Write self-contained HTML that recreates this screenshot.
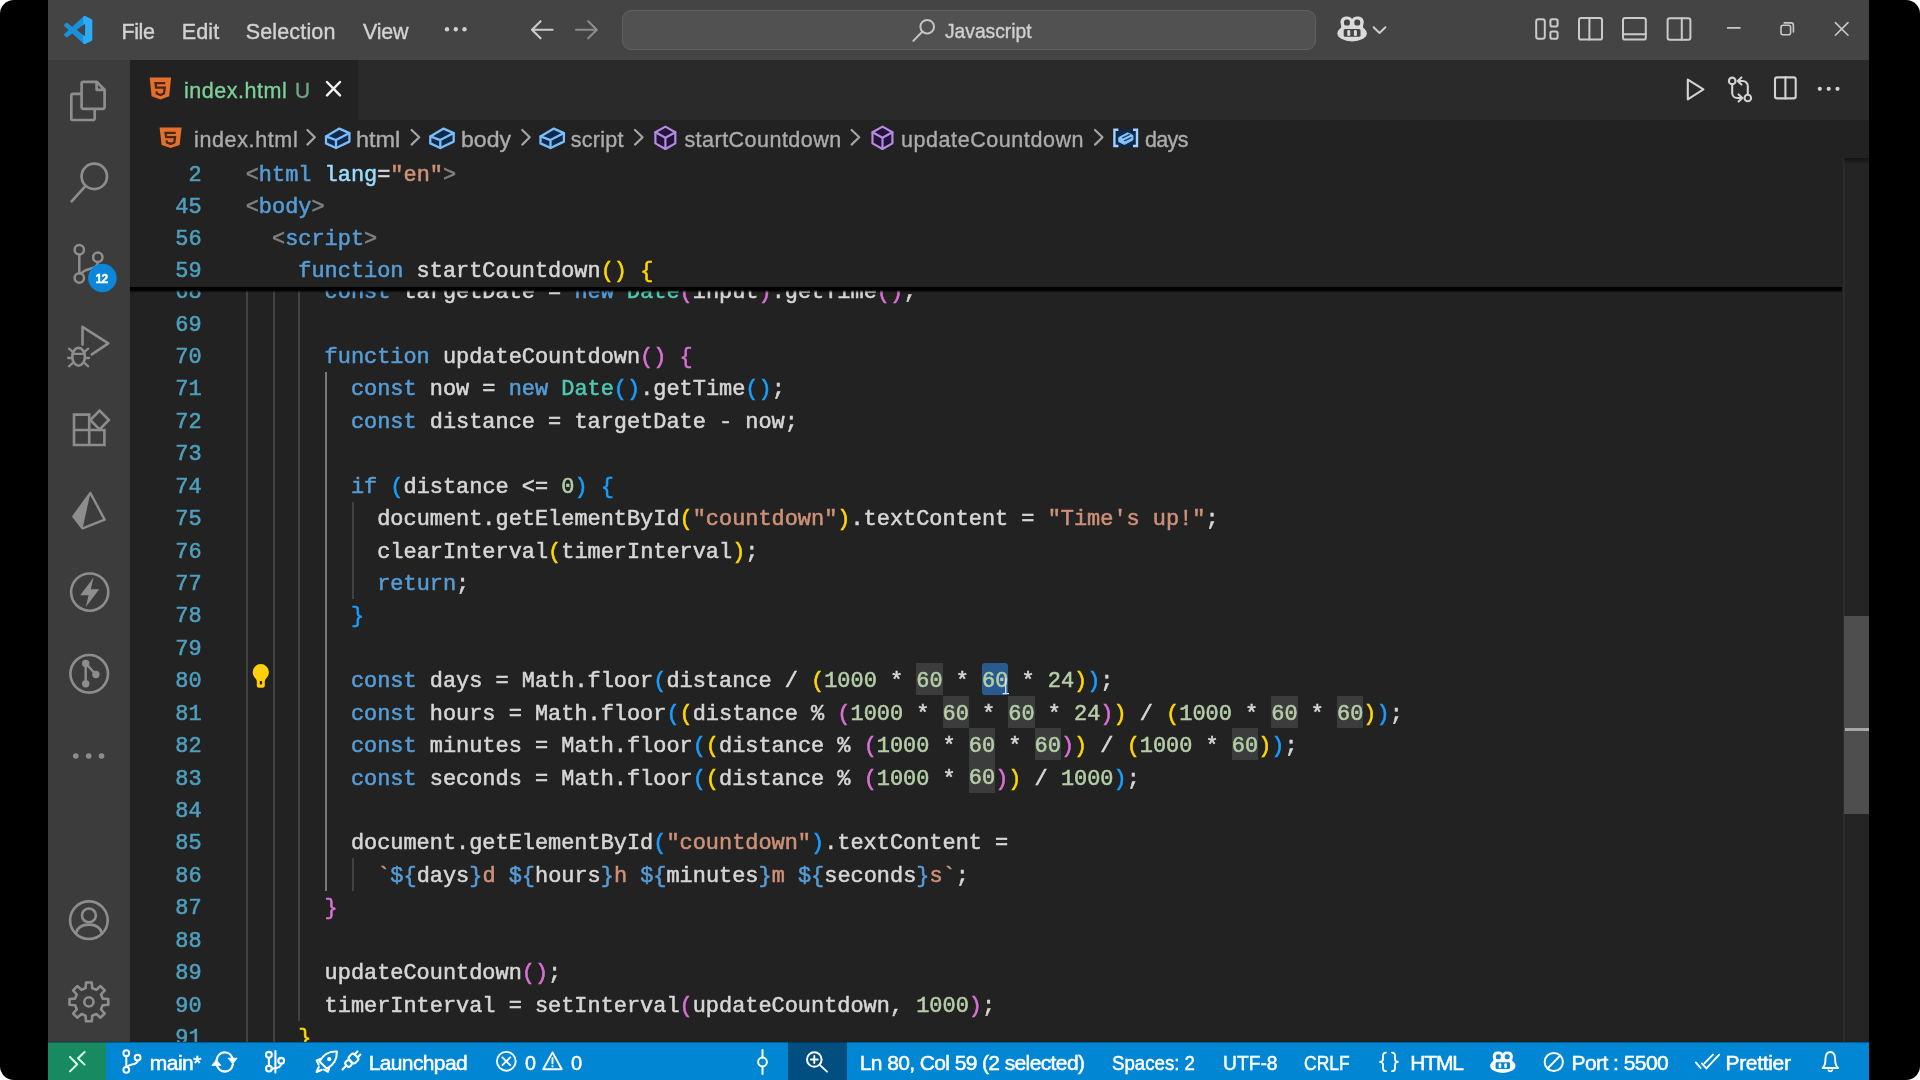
<!DOCTYPE html>
<html><head><meta charset="utf-8"><title>index.html - Javascript - Visual Studio Code</title>
<style>
*{margin:0;padding:0;box-sizing:border-box}
html,body{width:1920px;height:1080px;overflow:hidden;background:#fff;font-family:"Liberation Sans",sans-serif}
#frame{will-change:transform;position:absolute;left:0;top:0;width:1920px;height:1080px;background:#000;border-radius:14px;overflow:hidden}
#frame div,#frame span.t{position:absolute}
#win{left:48px;top:0;width:1821px;height:1080px;background:#222222}
#titlebar{left:48px;top:0;width:1821px;height:60px;background:#444444}
#actbar{left:48px;top:60px;width:82px;height:982px;background:#3c3c3c}
#tabbar{left:130px;top:60px;width:1739px;height:59.5px;background:#2a2a2a}
#tab{left:130px;top:60px;width:227.5px;height:59.5px;background:#222222}
#status{left:48px;top:1042px;width:1821px;height:38px;background:#0086d3}
#remote{left:48px;top:1042px;width:58px;height:38px;background:#178a62}
#zoombox{left:787.5px;top:1042px;width:59.5px;height:38px;background:#004f80}
#search{left:622px;top:10px;width:694px;height:39.5px;background:#515151;border:1.5px solid #616161;border-radius:9px}
#sticky{left:130px;top:158px;width:1711px;height:128.5px;background:#222222}
#stickyshadow{left:130px;top:286.5px;width:1711.5px;height:6px;background:linear-gradient(#000 0,#000 50%,rgba(0,0,0,0) 100%)}
.ln{left:130px;width:71.6px;text-align:right;color:#4e9fbd}
.ln,.cl{font-family:"Liberation Mono",monospace;font-size:21.91px;line-height:32.43px;height:32.43px;white-space:pre;-webkit-text-stroke:0.55px}
.cl{color:#d6d6d6}
.cl i{font-style:normal}
.kw,.tn{color:#569cd6}.cls{color:#4ec9b0}.num,.hl,.sel{color:#b5cea8}.st{color:#ce9178}
.tg{color:#808080}.at{color:#9cdcfe}.b1{color:#ffd700}.b2{color:#da70d6}.b3{color:#179fff}
.hl,.sel{padding:6.1px 0 1.2px}
.sel{border-radius:3px}
.hl{background:#3a3d3b}.sel{background:#2b5b8e}
.g{width:2px;background:#424242}
.ga{background:#787878}
.t{white-space:pre;line-height:1;-webkit-text-stroke:0.38px}
.sb{-webkit-text-stroke:0.5px}
svg{position:absolute;left:0;top:0;overflow:visible}

</style></head><body>
<div id="frame"><div id="win"></div>
<div id="editor">
<div class="g" style="left:246px;top:274.71px;height:778.32px"></div>
<div class="g" style="left:273px;top:274.71px;height:778.32px"></div>
<div class="g" style="left:298px;top:274.71px;height:745.89px"></div>
<div class="g ga" style="left:325px;top:372.00px;height:518.88px"></div>
<div class="g" style="left:351.5px;top:501.72px;height:97.29px"></div>
<div class="g" style="left:351.5px;top:858.45px;height:32.43px"></div>
<div class="ln" style="top:277.11px">68</div>
<div class="cl" style="top:277.11px;left:324.60px"><i class="kw">const</i> targetDate = <i class="kw">new</i> <i class="cls">Date</i><i class="b2">(</i>input<i class="b2">)</i>.getTime<i class="b2">()</i>;</div>
<div class="ln" style="top:309.54px">69</div>
<div class="ln" style="top:341.97px">70</div>
<div class="cl" style="top:341.97px;left:324.60px"><i class="kw">function</i> updateCountdown<i class="b2">()</i> <i class="b2">{</i></div>
<div class="ln" style="top:374.40px">71</div>
<div class="cl" style="top:374.40px;left:350.90px"><i class="kw">const</i> now = <i class="kw">new</i> <i class="cls">Date</i><i class="b3">()</i>.getTime<i class="b3">()</i>;</div>
<div class="ln" style="top:406.83px">72</div>
<div class="cl" style="top:406.83px;left:350.90px"><i class="kw">const</i> distance = targetDate - now;</div>
<div class="ln" style="top:439.26px">73</div>
<div class="ln" style="top:471.69px">74</div>
<div class="cl" style="top:471.69px;left:350.90px"><i class="kw">if</i> <i class="b3">(</i>distance &lt;= <i class="num">0</i><i class="b3">)</i> <i class="b3">{</i></div>
<div class="ln" style="top:504.12px">75</div>
<div class="cl" style="top:504.12px;left:377.20px">document.getElementById<i class="b1">(</i><i class="st">"countdown"</i><i class="b1">)</i>.textContent = <i class="st">"Time's up!"</i>;</div>
<div class="ln" style="top:536.55px">76</div>
<div class="cl" style="top:536.55px;left:377.20px">clearInterval<i class="b1">(</i>timerInterval<i class="b1">)</i>;</div>
<div class="ln" style="top:568.98px">77</div>
<div class="cl" style="top:568.98px;left:377.20px"><i class="kw">return</i>;</div>
<div class="ln" style="top:601.41px">78</div>
<div class="cl" style="top:601.41px;left:350.90px"><i class="b3">}</i></div>
<div class="ln" style="top:633.84px">79</div>
<div class="ln" style="top:666.27px">80</div>
<div class="cl" style="top:666.27px;left:350.90px"><i class="kw">const</i> days = Math.floor<i class="b3">(</i>distance / <i class="b1">(</i><i class="num">1000</i> * <i class="hl">60</i> * <i class="sel">60</i> * <i class="num">24</i><i class="b1">)</i><i class="b3">)</i>;</div>
<div class="ln" style="top:698.70px">81</div>
<div class="cl" style="top:698.70px;left:350.90px"><i class="kw">const</i> hours = Math.floor<i class="b3">(</i><i class="b1">(</i>distance % <i class="b2">(</i><i class="num">1000</i> * <i class="hl">60</i> * <i class="hl">60</i> * <i class="num">24</i><i class="b2">)</i><i class="b1">)</i> / <i class="b1">(</i><i class="num">1000</i> * <i class="hl">60</i> * <i class="hl">60</i><i class="b1">)</i><i class="b3">)</i>;</div>
<div class="ln" style="top:731.13px">82</div>
<div class="cl" style="top:731.13px;left:350.90px"><i class="kw">const</i> minutes = Math.floor<i class="b3">(</i><i class="b1">(</i>distance % <i class="b2">(</i><i class="num">1000</i> * <i class="hl">60</i> * <i class="hl">60</i><i class="b2">)</i><i class="b1">)</i> / <i class="b1">(</i><i class="num">1000</i> * <i class="hl">60</i><i class="b1">)</i><i class="b3">)</i>;</div>
<div class="ln" style="top:763.56px">83</div>
<div class="cl" style="top:763.56px;left:350.90px"><i class="kw">const</i> seconds = Math.floor<i class="b3">(</i><i class="b1">(</i>distance % <i class="b2">(</i><i class="num">1000</i> * <i class="hl">60</i><i class="b2">)</i><i class="b1">)</i> / <i class="num">1000</i><i class="b3">)</i>;</div>
<div class="ln" style="top:795.99px">84</div>
<div class="ln" style="top:828.42px">85</div>
<div class="cl" style="top:828.42px;left:350.90px">document.getElementById<i class="b3">(</i><i class="st">"countdown"</i><i class="b3">)</i>.textContent =</div>
<div class="ln" style="top:860.85px">86</div>
<div class="cl" style="top:860.85px;left:377.20px"><i class="st">`</i><i class="kw">${</i>days<i class="kw">}</i><i class="st">d </i><i class="kw">${</i>hours<i class="kw">}</i><i class="st">h </i><i class="kw">${</i>minutes<i class="kw">}</i><i class="st">m </i><i class="kw">${</i>seconds<i class="kw">}</i><i class="st">s`</i>;</div>
<div class="ln" style="top:893.28px">87</div>
<div class="cl" style="top:893.28px;left:324.60px"><i class="b2">}</i></div>
<div class="ln" style="top:925.71px">88</div>
<div class="ln" style="top:958.14px">89</div>
<div class="cl" style="top:958.14px;left:324.60px">updateCountdown<i class="b2">()</i>;</div>
<div class="ln" style="top:990.57px">90</div>
<div class="cl" style="top:990.57px;left:324.60px">timerInterval = setInterval<i class="b2">(</i>updateCountdown, <i class="num">1000</i><i class="b2">)</i>;</div>
<div class="ln" style="top:1023.00px">91</div>
<div class="cl" style="top:1023.00px;left:298.30px"><i class="b1">}</i></div>
</div>
<div id="sticky"></div><div id="stickyshadow"></div><div id="stickyrows">
<div class="ln" style="top:159.80px">2</div>
<div class="cl" style="top:159.80px;left:245.70px"><i class="tg">&lt;</i><i class="tn">html</i> <i class="at">lang</i>=<i class="st">"en"</i><i class="tg">&gt;</i></div>
<div class="ln" style="top:191.80px">45</div>
<div class="cl" style="top:191.80px;left:245.70px"><i class="tg">&lt;</i><i class="tn">body</i><i class="tg">&gt;</i></div>
<div class="ln" style="top:223.80px">56</div>
<div class="cl" style="top:223.80px;left:272.00px"><i class="tg">&lt;</i><i class="tn">script</i><i class="tg">&gt;</i></div>
<div class="ln" style="top:255.80px">59</div>
<div class="cl" style="top:255.80px;left:298.30px"><i class="kw">function</i> startCountdown<i class="b1">()</i> <i class="b1">{</i></div>
</div>
<div id="titlebar"></div>
<div id="search"></div>
<div id="actbar"></div>
<div id="tabbar"></div>
<div id="tab"></div>
<div id="vscroll" style="left:1844px;top:158px;width:25px;height:884px;background:#242424"></div>
<div style="left:1843px;top:158px;width:1.5px;height:884px;background:#2c2c2c"></div>
<div style="left:1844px;top:157.5px;width:25px;height:7px;background:linear-gradient(#141414,rgba(20,20,20,0))"></div>
<div id="slider" style="left:1844px;top:615.5px;width:25px;height:198px;background:#4e4e4e"></div>
<div style="left:1845px;top:728px;width:24px;height:2.5px;background:#a8a8a8"></div>
<div id="status"></div>
<div id="remote"></div>
<div id="zoombox"></div>
<div style="left:48px;top:1041px;width:1821px;height:2px;background:linear-gradient(rgba(0,20,40,0),rgba(0,30,60,0.55))"></div>

<svg width="1920" height="1080" viewBox="0 0 1920 1080" fill="none" stroke-linecap="round" stroke-linejoin="round">
<g transform="translate(62.9,15.9) scale(0.282)"><clipPath id="vr"><rect x="72" y="-2" width="40" height="104"/></clipPath><path d="M74.9 99.3a6.2 6.2 0 0 0 4.96-.19l20.59-9.9A6.25 6.25 0 0 0 104 83.6V16.4a6.25 6.25 0 0 0-3.54-5.63L79.87.86a6.2 6.2 0 0 0-7.1 1.21L33.35 38.04 16.18 25a4.16 4.16 0 0 0-5.32.24l-5.5 5.01a4.17 4.17 0 0 0 0 6.17L20.24 50 5.35 63.58a4.17 4.17 0 0 0 0 6.17l5.51 5.01a4.16 4.16 0 0 0 5.32.24l17.17-13.03 39.42 35.96a6.2 6.2 0 0 0 2.13 1.37zM79 27.3 49.1 50 79 72.7V27.3z" fill="#1b8fd9" fill-rule="evenodd"/><path d="M74.9 99.3a6.2 6.2 0 0 0 4.96-.19l20.59-9.9A6.25 6.25 0 0 0 104 83.6V16.4a6.25 6.25 0 0 0-3.54-5.63L79.87.86a6.2 6.2 0 0 0-7.1 1.21L33.35 38.04 16.18 25a4.16 4.16 0 0 0-5.32.24l-5.5 5.01a4.17 4.17 0 0 0 0 6.17L20.24 50 5.35 63.58a4.17 4.17 0 0 0 0 6.17l5.51 5.01a4.16 4.16 0 0 0 5.32.24l17.17-13.03 39.42 35.96a6.2 6.2 0 0 0 2.13 1.37zM79 27.3 49.1 50 79 72.7V27.3z" fill="#2cacf6" fill-rule="evenodd" clip-path="url(#vr)"/></g>
<g fill="#d0d0d0"><circle cx="447" cy="29.2" r="2.2"/><circle cx="455.8" cy="29.2" r="2.2"/><circle cx="464.5" cy="29.2" r="2.2"/></g>
<path d="M552.6 29.7H532.4M540.6 21.2L532 29.7L540.6 38.3" stroke="#cccccc" stroke-width="2.1"/>
<path d="M576 29.7H596.4M588.2 21.2L596.8 29.7L588.2 38.3" stroke="#8c8c8c" stroke-width="2.1"/>
<g stroke="#c4c4c4" stroke-width="2"><circle cx="927.2" cy="26.7" r="6.8"/><path d="M922.3 31.7L913.3 40.9"/></g>
<g transform="translate(1352.1,28.4) scale(1.0)" stroke="none"><ellipse cx="0" cy="4.8" rx="14.7" ry="8.2" fill="#dadada"/><rect x="-11.6" y="-12" width="12.4" height="11.6" rx="5.2" fill="#dadada"/><rect x="-0.8" y="-12" width="12.4" height="11.6" rx="5.2" fill="#dadada"/><rect x="-11" y="-4" width="22" height="8" fill="#dadada"/><rect x="-8.1" y="-8.8" width="5.9" height="5.9" rx="2.6" fill="#444444"/><rect x="2.2" y="-8.8" width="5.9" height="5.9" rx="2.6" fill="#444444"/><rect x="-8.4" y="0.6" width="16.8" height="7.8" rx="1.6" fill="#444444"/><rect x="-4.8" y="1.7" width="3" height="6" rx="1.4" fill="#dadada"/><rect x="1.8" y="1.7" width="3" height="6" rx="1.4" fill="#dadada"/></g>
<path d="M1373.6 27.2L1379.5 33L1385.4 27.2" stroke="#cccccc" stroke-width="2"/>
<g stroke="#cacaca" stroke-width="2">
<rect x="1536.2" y="19.3" width="8.6" height="19.4" rx="2.2"/><rect x="1550.4" y="19.3" width="7.2" height="7.2" rx="1.8"/><rect x="1550.4" y="31.5" width="7.2" height="7.2" rx="1.8"/>
<rect x="1579" y="18" width="23" height="21.6" rx="2.2"/><path d="M1589.4 18V39.6"/>
<rect x="1623" y="18" width="22.8" height="21.6" rx="2.2"/><path d="M1623 34.3H1645.8"/>
<rect x="1667.6" y="18.2" width="22.8" height="21.5" rx="2.2"/><path d="M1681.8 18.2V39.7"/>
</g>
<g stroke="#c8c8c8" stroke-width="1.6"><path d="M1727.6 27.9H1740"/><rect x="1781" y="25.2" width="9.6" height="9.6" rx="2"/><path d="M1784.2 22.9H1791a2.4 2.4 0 0 1 2.4 2.4V32"/><path d="M1835.4 22.6L1848 35.2M1848 22.6L1835.4 35.2"/></g>
<path d="M149.7 77.4H171.1L169.2 96.3L160.39999999999998 99.4L151.6 96.3Z" fill="#e5702d" stroke="none"/><path d="M165.3 83.1H155.5L156.1 87.7H164.7L164.0 93.5L160.39999999999998 95.0L156.8 93.5L156.5 91.3" stroke="#4a2613" stroke-width="2.3" stroke-linecap="butt" stroke-linejoin="miter"/>
<path d="M327 82L340 95.4M340 82L327 95.4" stroke="#f0f0f0" stroke-width="2.5"/>
<path d="M159.6 127.5H181.6L179.6 145.1L170.6 148.0L161.6 145.1Z" fill="#e5702d" stroke="none"/><path d="M175.7 132.8H165.5L166.2 137.1H175.0L174.3 142.5L170.6 143.9L166.9 142.5L166.6 140.4" stroke="#4a2613" stroke-width="2.3" stroke-linecap="butt" stroke-linejoin="miter"/>
<g stroke="#d2d2d2" stroke-width="2.1">
<path d="M1687.8 79.6L1703.4 89.4L1687.8 99.3Z"/>
<circle cx="1732.2" cy="80.9" r="3.3"/><circle cx="1747.8" cy="98" r="3.3"/>
<path d="M1732.2 84.4V93a5 5 0 0 0 5 5H1742M1738.6 94.4L1742.3 98L1738.6 101.6"/>
<path d="M1747.8 94.5V86a5 5 0 0 0 -5 -5H1738M1741.4 77.4L1737.7 81L1741.4 84.6"/>
<rect x="1775" y="77.4" width="20.7" height="21" rx="2.2"/><path d="M1785.4 77.4V98.4"/>
</g>
<g fill="#d2d2d2"><circle cx="1819.8" cy="88.8" r="2.1"/><circle cx="1828.7" cy="88.8" r="2.1"/><circle cx="1837.5" cy="88.8" r="2.1"/></g>
<g stroke="#a4a4a4" stroke-width="2.2">
<path d="M307.4 130L314.8 137.3L307.4 144.6"/>
<path d="M411.6 130L419.2 137.3L411.6 144.6"/>
<path d="M522.3 130L529.7 137.3L522.3 144.6"/>
<path d="M635 130L642.6 137.3L635 144.6"/>
<path d="M851.6 130L859.2 137.3L851.6 144.6"/>
<path d="M1095 130L1102.5 137.3L1095 144.6"/>
</g>
<path d="M326.0 136.4L339.3 128.6L349.4 133.1V141.6L336.0 148.0L326.0 143.4Z" fill="#11294a" stroke="#7cbdf7" stroke-width="2.3"/><path d="M326.0 136.4L336.0 140.1L349.4 133.1M336.0 140.1V148.0" stroke="#7cbdf7" stroke-width="2.3"/>
<path d="M430.3 136.4L443.6 128.6L453.7 133.1V141.6L440.3 148.0L430.3 143.4Z" fill="#11294a" stroke="#7cbdf7" stroke-width="2.3"/><path d="M430.3 136.4L440.3 140.1L453.7 133.1M440.3 140.1V148.0" stroke="#7cbdf7" stroke-width="2.3"/>
<path d="M540.5 136.4L553.8 128.6L563.9 133.1V141.6L550.5 148.0L540.5 143.4Z" fill="#11294a" stroke="#7cbdf7" stroke-width="2.3"/><path d="M540.5 136.4L550.5 140.1L563.9 133.1M550.5 140.1V148.0" stroke="#7cbdf7" stroke-width="2.3"/>
<path d="M665.4 126.6L675.3 132.2V143.4L665.4 149.0L655.4 143.4V132.2Z" fill="#21133a" stroke="#b68be0" stroke-width="2.2"/><path d="M655.4 132.2L665.4 137.8L675.3 132.2M665.4 137.8V149.0" stroke="#b68be0" stroke-width="2.2"/>
<path d="M882.5 126.6L892.4 132.2V143.4L882.5 149.0L872.5 143.4V132.2Z" fill="#21133a" stroke="#b68be0" stroke-width="2.2"/><path d="M872.5 132.2L882.5 137.8L892.4 132.2M882.5 137.8V149.0" stroke="#b68be0" stroke-width="2.2"/>
<rect x="1114.2" y="129.6" width="23" height="16.8" fill="#0c2a4e"/><path d="M1118.4 129.8H1114.4V146H1118.4M1133 129.8H1137V146H1133" stroke="#a6d1fb" stroke-width="2.4" stroke-linejoin="miter" stroke-linecap="butt"/><path d="M1119 137.4L1127.6 132.8L1132.9 135.4V140L1124.4 144.4L1119 141.8Z" fill="#88c1f6" stroke="#88c1f6" stroke-width="1"/><path d="M1122.6 137.8L1129.4 134.6M1124.6 140.8L1131 137.6" stroke="#1a4272" stroke-width="1.3"/>
<g stroke="#8d8d8d" stroke-width="2.7">
<path d="M83.2 81.8H96.6L104.6 89.8V107.2a1.6 1.6 0 0 1 -1.6 1.6H83.2a1.6 1.6 0 0 1 -1.6 -1.6V83.4a1.6 1.6 0 0 1 1.6 -1.6ZM96.6 81.8V89.8H104.6"/>
<path d="M81.4 93.8H72.9a1.6 1.6 0 0 0 -1.6 1.6V118.4a1.6 1.6 0 0 0 1.6 1.6H93.1a1.6 1.6 0 0 0 1.6 -1.6V109"/>
<circle cx="94.3" cy="176.4" r="12.7"/><path d="M85.6 185.9L71.6 201.3"/>
</g>
<g stroke="#8d8d8d" stroke-width="2.5"><circle cx="79.3" cy="249.8" r="4.7"/><circle cx="97.8" cy="257.2" r="4.7"/><circle cx="79.3" cy="278" r="4.7"/><path d="M79.3 254.6V273.2M97.8 262C97.8 270.5 84 267.5 81.5 273.8"/></g>
<circle cx="102.4" cy="278" r="14.3" fill="#0b86d8"/>
<g stroke="#8d8d8d" stroke-width="2.6"><path d="M82.5 344.6V326.8L108.3 343.3L91.8 354.4"/>
<ellipse cx="78.6" cy="356.8" rx="6.3" ry="8.9"/><path stroke-width="2.3" d="M72.6 353.9H84.6M72.5 351.6L69 348.6M84.7 351.6L88.2 348.6M72.2 358H68.2M85 358H89M72.9 362.8L69 366.3M84.3 362.8L88.2 366.3"/></g>
<g stroke="#8d8d8d" stroke-width="2.6" stroke-linejoin="miter"><path d="M74 414.6H89.2V430H104.4V445H74ZM74 430H89.2V445"/><path d="M99.6 410.6L108.9 420L99.6 429.4L90.2 420Z"/></g>
<path d="M90.4 493L104.6 519.6L82.6 528.4L73.4 516.4Z" stroke="#8d8d8d" stroke-width="2.4"/><path d="M90.4 493L82.6 528.4L73.4 516.4Z" fill="#8d8d8d"/>
<circle cx="89.7" cy="592.1" r="18.6" stroke="#8d8d8d" stroke-width="2.6"/><path d="M93.6 577.6L80.2 595.2H88.6L85.8 607L99.2 589.2H90.8Z" fill="#8d8d8d"/>
<circle cx="89.2" cy="673.8" r="18.8" stroke="#8d8d8d" stroke-width="2.6"/><g fill="#8d8d8d"><circle cx="85.7" cy="663.4" r="3.7"/><circle cx="95.9" cy="674.5" r="3.7"/><circle cx="85.7" cy="683.8" r="3.7"/></g><path d="M85.7 663.4V683.8M85.7 663.4L95.9 674.5" stroke="#8d8d8d" stroke-width="2.4"/>
<g fill="#8d8d8d"><circle cx="75.8" cy="756" r="2.8"/><circle cx="88.7" cy="756" r="2.8"/><circle cx="101.5" cy="756" r="2.8"/></g>
<g stroke="#8d8d8d" stroke-width="2.6"><circle cx="88.9" cy="920.2" r="18.8"/><circle cx="88.9" cy="915.4" r="6.9"/><path d="M76 933.2C77.5 926.4 83 924.6 88.9 924.6C94.8 924.6 100.3 926.4 101.8 933.2"/></g>
<path d="M86.0 982.5L91.8 982.5L92.2 988.1L96.3 989.8L100.5 986.1L104.7 990.3L101.0 994.5L102.7 998.6L108.3 999.0L108.3 1004.8L102.7 1005.2L101.0 1009.3L104.7 1013.5L100.5 1017.7L96.3 1014.0L92.2 1015.7L91.8 1021.3L86.0 1021.3L85.6 1015.7L81.5 1014.0L77.3 1017.7L73.1 1013.5L76.8 1009.3L75.1 1005.2L69.5 1004.8L69.5 999.0L75.1 998.6L76.8 994.5L73.1 990.3L77.3 986.1L81.5 989.8L85.6 988.1Z" stroke="#8d8d8d" stroke-width="2.6"/><circle cx="88.9" cy="1001.9" r="4.6" stroke="#8d8d8d" stroke-width="2.6"/>
<path d="M260.8 664.1a8.1 8.1 0 0 0 -8.1 8.1c0 3 1.6 4.8 3 6.6c0.8 1 1.1 1.8 1.1 3v4a2 2 0 0 0 2 2h4a2 2 0 0 0 2 -2v-4c0 -1.2 0.3 -2 1.1 -3c1.4 -1.8 3 -3.6 3 -6.6a8.1 8.1 0 0 0 -8.1 -8.1z" fill="#ffcf0a" stroke="none"/><rect x="259.8" y="680.9" width="2.3" height="3.5" rx="0.6" fill="#3a2600" stroke="none"/>
<path d="M1005.7 678.5V693.4M1002.6 693.6H1009" stroke="#d4e4f4" stroke-width="1.3" stroke-linecap="butt"/>
<path d="M70 1057L77.2 1064.2L70 1071.4M84.6 1052L78 1058.3L84.6 1064.6" stroke="#d8ffee" stroke-width="2"/>
<g stroke="#ffffff" stroke-width="2">
<circle cx="126.3" cy="1053.2" r="2.9"/><circle cx="137.6" cy="1057.6" r="2.9"/><circle cx="126.3" cy="1069.8" r="2.9"/><path d="M126.3 1056.2V1066.8M137.6 1060.6C137.6 1065.6 129 1063.6 127.4 1067"/>
<path stroke-width="2.3" d="M216.6 1060.2A8.2 8.7 0 0 1 232.6 1058.6M232.9 1064.4A8.2 8.7 0 0 1 216.9 1065"/><path d="M228.4 1058.2H237.2L232.9 1063.6ZM212.2 1065.4H221L216.5 1060Z" fill="#fff" stroke-width="0.8"/>
<g stroke-width="2.1"><circle cx="268.9" cy="1054.8" r="2.9"/><circle cx="268.9" cy="1068.6" r="2.9"/><path d="M268.9 1057.7V1065.7M275.4 1051V1072.6"/><circle cx="281.2" cy="1060.8" r="2.9"/><path d="M281.2 1063.7C281.2 1067.6 276 1068.4 271.8 1068.6"/></g>
<path stroke-width="2.1" d="M336.8 1051.6C328.6 1051.2 323 1054.8 319.6 1061.6L326.6 1068.6C333.6 1065.2 337.2 1059.6 336.8 1051.6ZM321.2 1058.8L316.6 1060.4L318.6 1064.6M329.4 1067L328 1071.8L324 1069.6M318.8 1067L316.6 1072L321.8 1069.8"/><circle cx="329.2" cy="1059.2" r="2.1" fill="#fff" stroke="none"/>
<g transform="translate(351,1061) rotate(45)" stroke-width="2.1"><rect x="-4.4" y="-7.2" width="8.8" height="7.4" rx="2.2"/><rect x="-3.2" y="0.6" width="6.4" height="5.8" rx="2.6"/><path d="M-2.1 -7.2V-11.2M2.1 -7.2V-11.2M0 6.4V12"/></g>
<circle cx="506.3" cy="1061.3" r="9.4" stroke-width="1.9"/><path stroke-width="1.9" d="M502.4 1057.4L510.2 1065.2M510.2 1057.4L502.4 1065.2"/>
<path stroke-width="1.9" d="M552.5 1052.4L561.8 1069.2H543.2ZM552.5 1058V1063.4"/><circle cx="552.5" cy="1066.3" r="1.1" fill="#fff" stroke="none"/>
<circle cx="762.5" cy="1062" r="4.4"/><path d="M762.5 1050V1057.6M762.5 1066.4V1074"/>
<circle cx="814.3" cy="1059.5" r="7.3"/><path d="M819.7 1064.9L827 1071.6M810.8 1059.5H817.8M814.3 1056V1063" stroke-width="1.9"/>
<path stroke-width="1.8" d="M1386 1052.6C1383.4 1052.6 1383 1053.6 1383 1055.6V1059C1383 1060.8 1382 1061.7 1380 1061.9C1382 1062.1 1383 1063 1383 1064.8V1068.2C1383 1070.2 1383.4 1071.2 1386 1071.2M1392 1052.6C1394.6 1052.6 1395 1053.6 1395 1055.6V1059C1395 1060.8 1396 1061.7 1398 1061.9C1396 1062.1 1395 1063 1395 1064.8V1068.2C1395 1070.2 1394.6 1071.2 1392 1071.2"/>
<circle cx="1553.8" cy="1062" r="9.1"/><path d="M1547.6 1068.5L1560.1 1055.6"/>
<path stroke-width="1.9" d="M1695.8 1062.4L1700.6 1068M1701.8 1063.4L1706.4 1068.4L1719.2 1054.6M1704.6 1063.2L1713 1054.6"/>
<path stroke-width="1.9" d="M1822.6 1068C1824.8 1066 1825.4 1063.4 1825.4 1060C1825.4 1055 1827.4 1052 1830.3 1052C1833.2 1052 1835.2 1055 1835.2 1060C1835.2 1063.4 1835.8 1066 1838 1068ZM1828.4 1070.2a2.1 2.1 0 0 0 3.8 0"/>
</g>
<g transform="translate(1502.8,1061.7) scale(0.86)" stroke="none"><ellipse cx="0" cy="4.8" rx="14.7" ry="8.2" fill="#ffffff"/><rect x="-11.6" y="-12" width="12.4" height="11.6" rx="5.2" fill="#ffffff"/><rect x="-0.8" y="-12" width="12.4" height="11.6" rx="5.2" fill="#ffffff"/><rect x="-11" y="-4" width="22" height="8" fill="#ffffff"/><rect x="-8.1" y="-8.8" width="5.9" height="5.9" rx="2.6" fill="#0086d3"/><rect x="2.2" y="-8.8" width="5.9" height="5.9" rx="2.6" fill="#0086d3"/><rect x="-8.4" y="0.6" width="16.8" height="7.8" rx="1.6" fill="#0086d3"/><rect x="-4.8" y="1.7" width="3" height="6" rx="1.4" fill="#ffffff"/><rect x="1.8" y="1.7" width="3" height="6" rx="1.4" fill="#ffffff"/></g>
</svg>
<span class="t" style="left:121.5px;top:22px;font-size:21.5px;letter-spacing:-0.433px;color:#d2d2d2;">File</span>
<span class="t" style="left:181.8px;top:22px;font-size:21.5px;letter-spacing:0.133px;color:#d2d2d2;">Edit</span>
<span class="t" style="left:245.7px;top:22px;font-size:21.5px;letter-spacing:0.163px;color:#d2d2d2;">Selection</span>
<span class="t" style="left:363.0px;top:22px;font-size:21.5px;letter-spacing:-0.267px;color:#d2d2d2;">View</span>
<span class="t" style="left:944.7px;top:20px;font-size:21px;letter-spacing:0.000px;color:#d0d0d0;transform:scaleX(0.9158);transform-origin:0 0;">Javascript</span>
<span class="t" style="left:183.9px;top:81px;font-size:21.5px;letter-spacing:0.544px;color:#7ccf98;">index.html</span>
<span class="t" style="left:294.6px;top:81px;font-size:21.5px;letter-spacing:0.000px;color:#6aa785;transform:scaleX(0.9692);transform-origin:0 0;">U</span>
<span class="t" style="left:194.0px;top:130px;font-size:21.5px;letter-spacing:0.633px;color:#ababab;">index.html</span>
<span class="t" style="left:356.4px;top:130px;font-size:21.5px;letter-spacing:0.000px;color:#ababab;transform:scaleX(1.0897);transform-origin:0 0;">html</span>
<span class="t" style="left:460.6px;top:130px;font-size:21.5px;letter-spacing:0.000px;color:#ababab;transform:scaleX(1.0717);transform-origin:0 0;">body</span>
<span class="t" style="left:570.8px;top:130px;font-size:21.5px;letter-spacing:0.240px;color:#ababab;">script</span>
<span class="t" style="left:684.4px;top:130px;font-size:21.5px;letter-spacing:0.477px;color:#ababab;">startCountdown</span>
<span class="t" style="left:901.0px;top:130px;font-size:21.5px;letter-spacing:0.571px;color:#ababab;">updateCountdown</span>
<span class="t" style="left:1145.0px;top:130px;font-size:21.5px;letter-spacing:-0.667px;color:#ababab;">days</span>
<span class="t" style="left:95.5px;top:273px;font-size:12px;letter-spacing:-0.700px;color:#ffffff;font-weight:700;">12</span>
<span class="t sb" style="left:149.8px;top:1052px;font-size:21px;letter-spacing:-0.525px;color:#ffffff;">main*</span>
<span class="t sb" style="left:368.7px;top:1052px;font-size:21px;letter-spacing:-0.625px;color:#ffffff;">Launchpad</span>
<span class="t sb" style="left:524.7px;top:1052px;font-size:21px;letter-spacing:0.000px;color:#ffffff;transform:scaleX(0.9364);transform-origin:0 0;">0</span>
<span class="t sb" style="left:570.8px;top:1052px;font-size:21px;letter-spacing:0.000px;color:#ffffff;transform:scaleX(0.9545);transform-origin:0 0;">0</span>
<span class="t sb" style="left:859.8px;top:1052px;font-size:21px;letter-spacing:-0.612px;color:#ffffff;">Ln 80, Col 59 (2 selected)</span>
<span class="t sb" style="left:1112.4px;top:1052px;font-size:21px;letter-spacing:0.000px;color:#ffffff;transform:scaleX(0.8880);transform-origin:0 0;">Spaces: 2</span>
<span class="t sb" style="left:1222.9px;top:1052px;font-size:21px;letter-spacing:0.000px;color:#ffffff;transform:scaleX(0.9172);transform-origin:0 0;">UTF-8</span>
<span class="t sb" style="left:1303.7px;top:1052px;font-size:21px;letter-spacing:0.000px;color:#ffffff;transform:scaleX(0.8333);transform-origin:0 0;">CRLF</span>
<span class="t sb" style="left:1410.3px;top:1052px;font-size:21px;letter-spacing:-1.167px;color:#ffffff;">HTML</span>
<span class="t sb" style="left:1571.5px;top:1052px;font-size:21px;letter-spacing:-0.550px;color:#ffffff;">Port : 5500</span>
<span class="t sb" style="left:1725.5px;top:1052px;font-size:21px;letter-spacing:-0.329px;color:#ffffff;">Prettier</span>
</div></body></html>
